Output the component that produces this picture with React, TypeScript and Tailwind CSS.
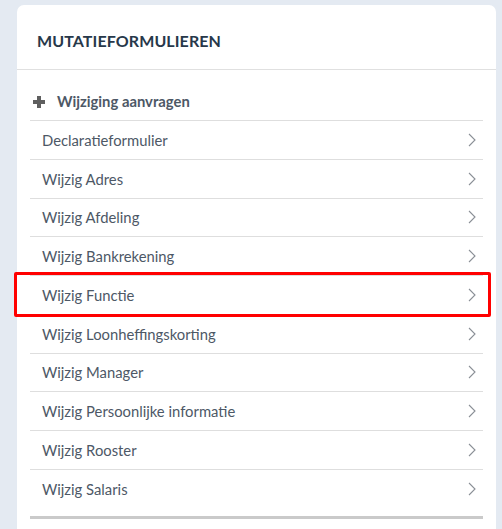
import { ReactNode } from "react";

const items = [
  "Declaratieformulier",
  "Wijzig Adres",
  "Wijzig Afdeling",
  "Wijzig Bankrekening",
  "Wijzig Functie",
  "Wijzig Loonheffingskorting",
  "Wijzig Manager",
  "Wijzig Persoonlijke informatie",
  "Wijzig Rooster",
  "Wijzig Salaris",
];

function Chevron() {
  return (
    <svg width="8" height="14" viewBox="0 0 8 14" className="text-[#8a8f96]">
      <polyline points="1,1 7,7 1,13" fill="none" stroke="currentColor" strokeWidth="1.1" />
    </svg>
  );
}

function Row({ children, highlighted, last }: { children: ReactNode; highlighted?: boolean; last?: boolean }) {
  return (
    <div
      className={`relative flex h-[38.78px] items-center justify-between pl-3 pr-[7px] ${last ? "" : "border-b border-[#dedede]"}`}
    >
      <span className="text-[14.8px] text-[#4d5866]">{children}</span>
      <Chevron />
      {highlighted && (
        <div className="pointer-events-none absolute -left-[16px] -right-[8px] -top-[4px] -bottom-[3px] rounded-[2px] border-[3.5px] border-[#ff0000]" />
      )}
    </div>
  );
}

export default function App() {
  return (
    <div className="min-h-[529px] bg-[#e4eaf2] pl-[17px] pr-[6px] pt-[5px]" style={{ fontFamily: "Lato, 'Open Sans', sans-serif" }}>
      <div className="rounded-t-[7px] bg-white">
        <div className="flex h-[65px] items-center border-b border-[#e0e0e0] px-[20px] pt-[8px]">
          <h2 className="text-[16px] font-bold tracking-[0.1px] text-[#27384a]">MUTATIEFORMULIEREN</h2>
        </div>
        <div className="px-[13px] pt-[13px]">
          <div className="flex h-[38px] items-center gap-[12px] border-b border-[#dedede] pl-[3px]">
            <svg width="12" height="12" viewBox="0 0 12 12" className="text-[#5f5f5f]">
              <rect x="4" y="0" width="4" height="12" fill="currentColor" />
              <rect x="0" y="4" width="12" height="4" fill="currentColor" />
            </svg>
            <span className="text-[14.8px] font-bold text-[#4d5866]">Wijziging aanvragen</span>
          </div>
          {items.map((label, i) => (
            <Row key={label} highlighted={label === "Wijzig Functie"} last={i === items.length - 1}>
              {label}
            </Row>
          ))}
          <div className="h-[7px]" />
          <div className="h-[3px] bg-[#cacaca]" />
          <div className="h-[10px]" />
        </div>
      </div>
    </div>
  );
}
